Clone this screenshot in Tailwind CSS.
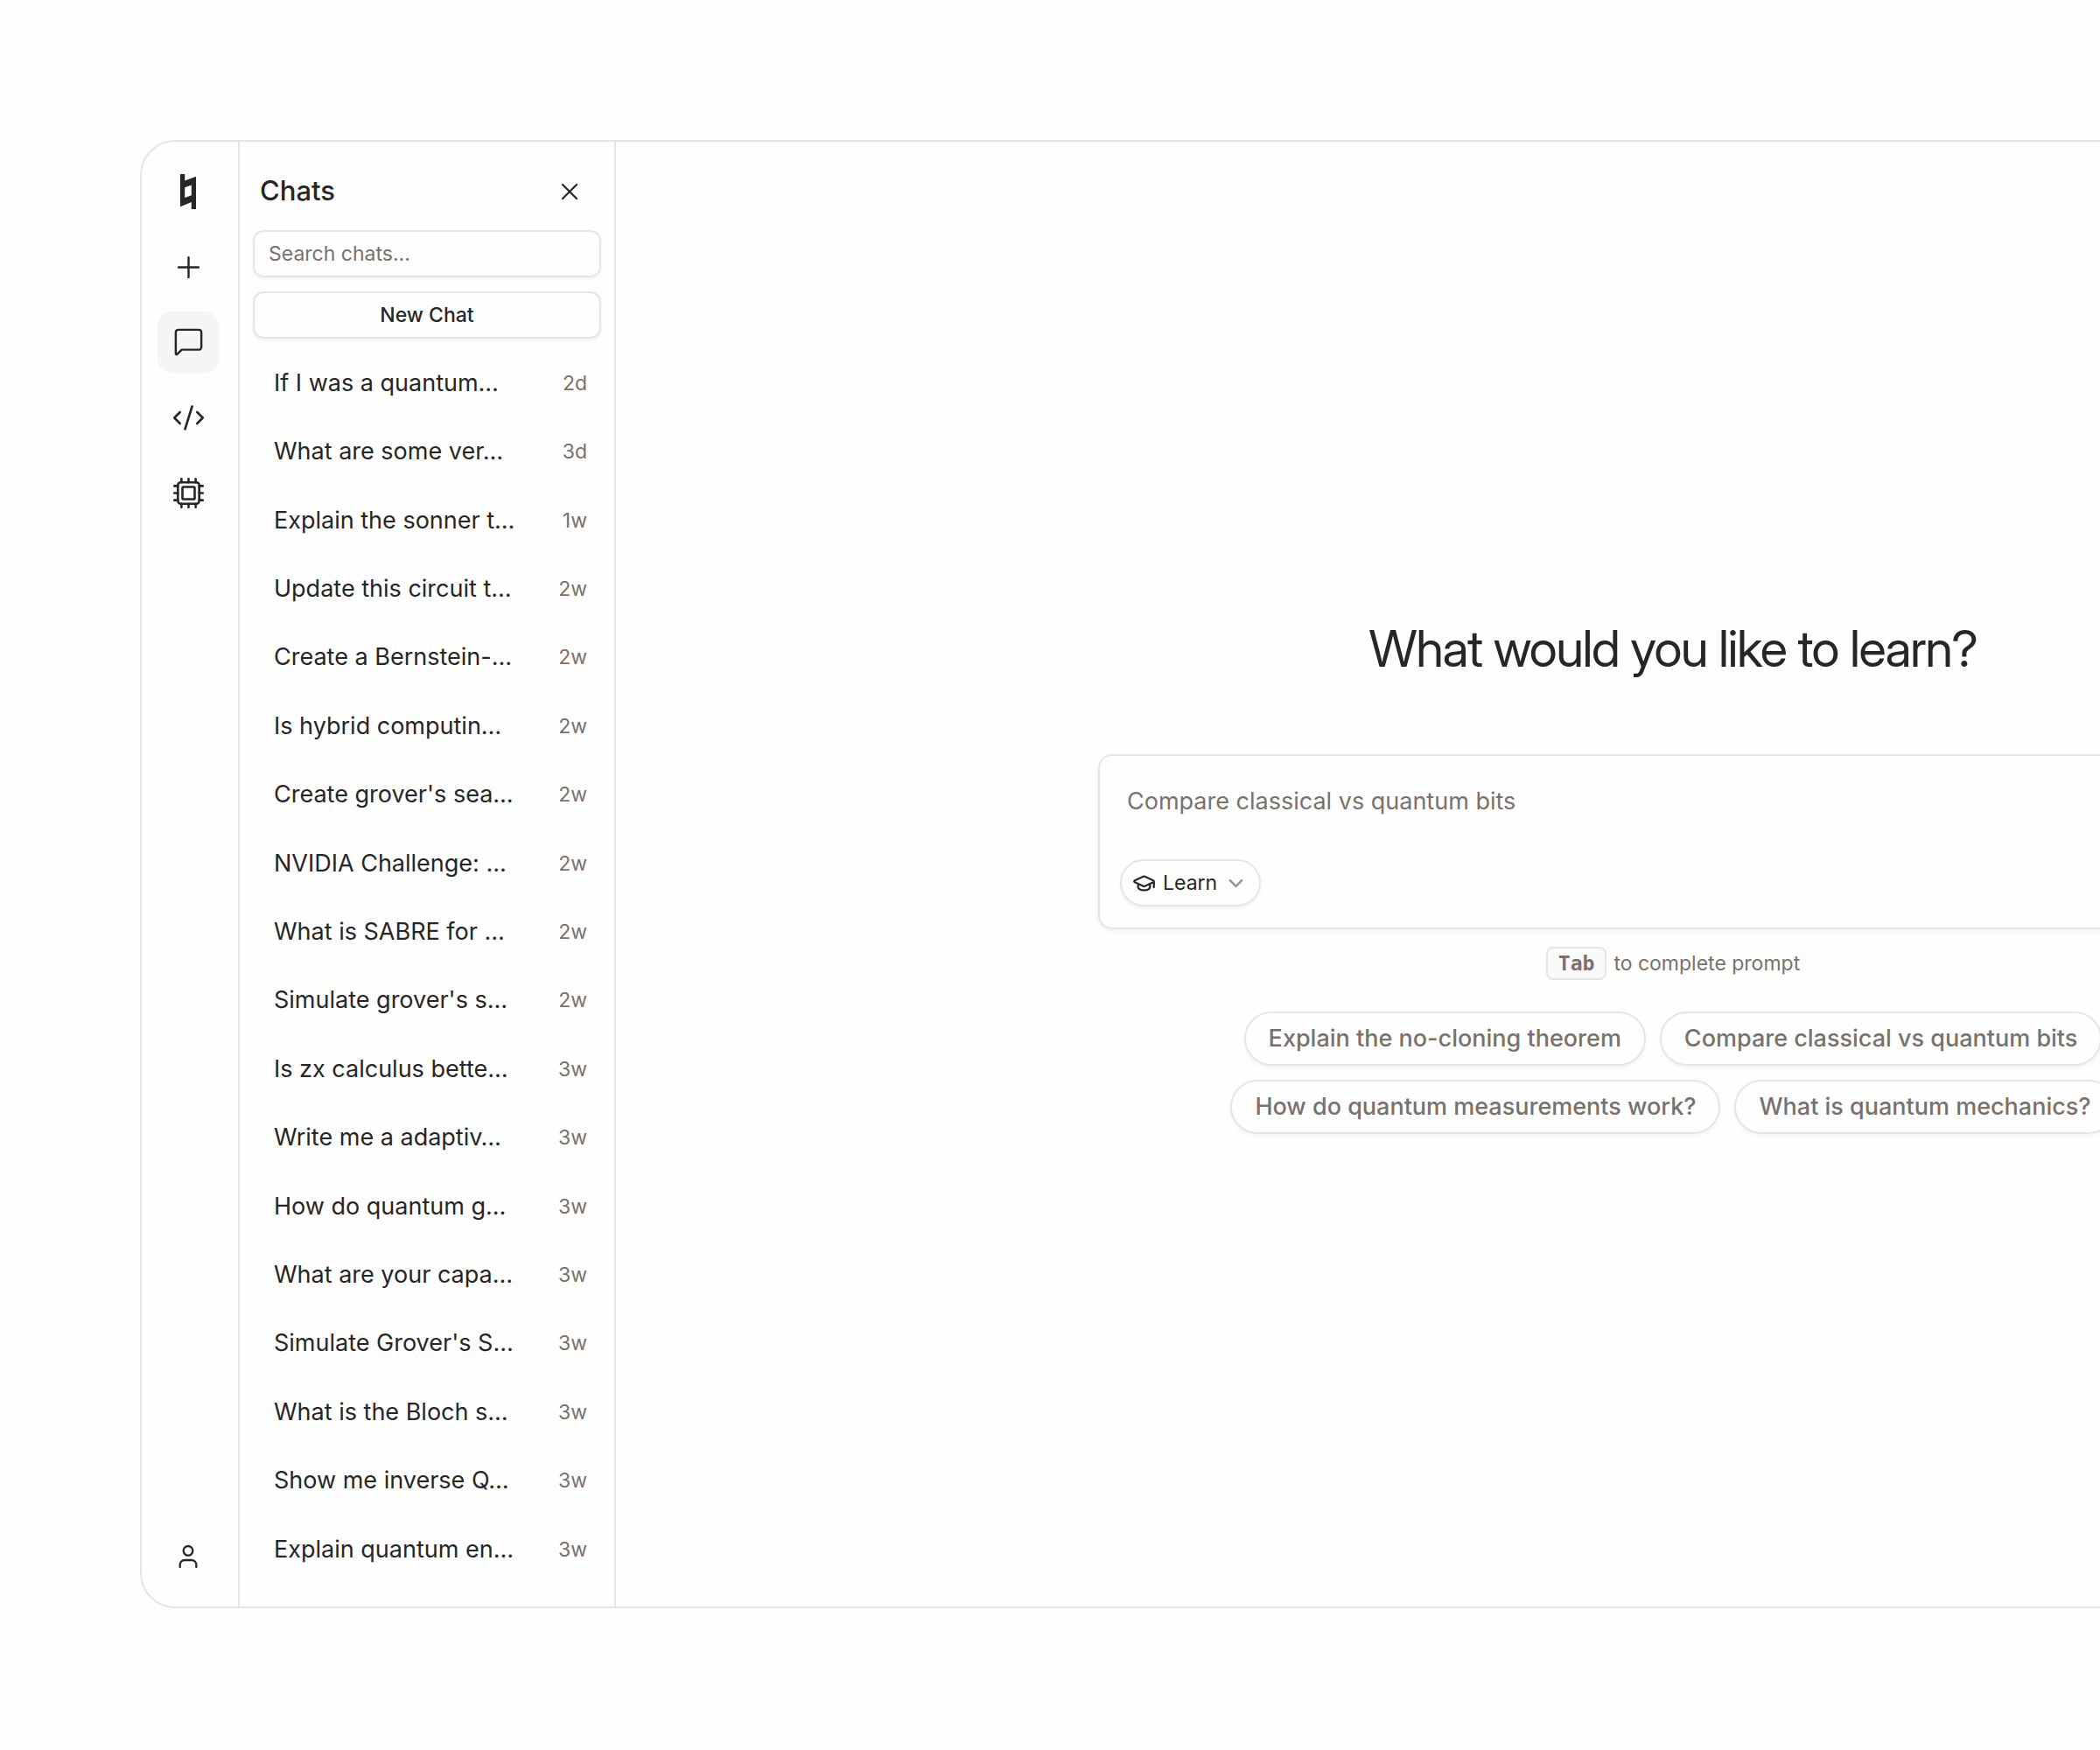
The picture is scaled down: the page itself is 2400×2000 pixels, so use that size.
<!DOCTYPE html>
<html lang="en">
<head>
    <meta charset="UTF-8">
    <meta name="viewport" content="width=device-width, initial-scale=1.0">
    <title>Chats</title>
    <script src="https://cdn.jsdelivr.net/npm/@tailwindcss/browser@4"></script>
</head>
<body class="bg-[#fefefe] text-[#262626] font-['Inter',sans-serif] overflow-x-hidden">
    <!-- App window, runs off the right edge of the page -->
    <div class="mt-40 ml-40 -mr-[722px] mb-40 flex min-h-[1678px] rounded-[40px] border-2 border-[#e5e5e5]">

        <!-- Icon rail -->
        <nav class="flex w-28 shrink-0 flex-col items-start gap-4 border-r-2 border-[#e5e5e5] py-[22px] pl-[18px]">
            <a href="#" aria-label="Home" class="flex size-[70px] items-center justify-center">
                <svg class="h-10 w-[18px]" viewBox="0 0 52 116" preserveAspectRatio="none" fill="currentColor" fill-rule="evenodd"><path d="M0 0H15V22L52 8V116H37V93L0 108ZM15 44V78L37 70V36Z"/></svg>
            </a>
            <button aria-label="New" class="flex size-[70px] items-center justify-center rounded-2xl">
                <svg class="size-[39px]" viewBox="0 0 24 24" fill="none" stroke="currentColor" stroke-width="1.5" stroke-linecap="round" stroke-linejoin="round"><path d="M5 12h14M12 5v14"/></svg>
            </button>
            <button aria-label="Chats" class="flex size-[70px] items-center justify-center rounded-2xl bg-[#f5f5f4]">
                <svg class="size-[39px]" viewBox="0 0 24 24" fill="none" stroke="currentColor" stroke-width="1.5" stroke-linecap="round" stroke-linejoin="round"><path d="M21 15.200a1.800 1.800 0 0 1-1.800 1.800H7.200l-3.200 3.200a.6.6 0 0 1-1-.4V4.800A1.800 1.800 0 0 1 4.800 3h14.400A1.800 1.800 0 0 1 21 4.800z"/></svg>
            </button>
            <button aria-label="Code" class="flex size-[70px] items-center justify-center rounded-2xl">
                <svg class="size-[39px]" viewBox="0 0 24 24" fill="none" stroke="currentColor" stroke-width="1.6" stroke-linecap="round" stroke-linejoin="round"><path d="m18 16 4-4-4-4M6 8l-4 4 4 4M14.500 4l-5 16"/></svg>
            </button>
            <button aria-label="Devices" class="flex size-[70px] items-center justify-center rounded-2xl">
                <svg class="size-[39px]" viewBox="0 0 24 24" fill="none" stroke="currentColor" stroke-width="1.6" stroke-linecap="round" stroke-linejoin="round"><rect x="4.500" y="4.500" width="15" height="15" rx="2"/><rect x="7.700" y="7.700" width="8.600" height="8.600" rx=".8"/><path d="M7 4.500V2M12 4.500V2M17 4.500V2M7 22v-2.500M12 22v-2.500M17 22v-2.500M4.500 7H2M4.500 12H2M4.500 17H2M22 7h-2.500M22 12h-2.500M22 17h-2.500"/></svg>
            </button>
            <button aria-label="Account" class="mt-auto flex size-[70px] items-center justify-center rounded-2xl">
                <svg class="size-8" viewBox="0 0 24 24" fill="none" stroke="currentColor" stroke-width="1.7" stroke-linecap="round" stroke-linejoin="round"><path d="M19 21v-2a4 4 0 0 0-4-4H9a4 4 0 0 0-4 4v2"/><circle cx="12" cy="7" r="4"/></svg>
            </button>
        </nav>

        <!-- Chat history -->
        <aside class="flex w-[430px] shrink-0 flex-col border-r-2 border-[#e5e5e5] px-[15px] pb-[26px]">
            <div class="flex h-[101px] items-center justify-between pt-3 pr-5 pl-2">
                <h2 class="text-[31px] font-medium">Chats</h2>
                <button aria-label="Close">
                    <svg class="size-8" viewBox="0 0 24 24" fill="none" stroke="currentColor" stroke-width="1.7" stroke-linecap="round" stroke-linejoin="round"><path d="M18 6 6 18M6 6l12 12"/></svg>
                </button>
            </div>
            <input type="text" aria-label="Search chats" placeholder="Search chats..." class="h-[54px] rounded-xl border-2 border-[#e5e5e5] px-4 text-[23px] shadow-[0_2px_4px_rgba(0,0,0,0.05)] placeholder:text-stone-500">
            <button class="mt-4 h-[54px] shrink-0 rounded-xl border-2 border-[#e5e5e5] text-[23px] font-medium shadow-[0_2px_4px_rgba(0,0,0,0.05)]">New Chat</button>
            <ul id="chat-list" class="mt-3 grid flex-1 auto-rows-fr"></ul>
        </aside>

        <!-- Prompt -->
        <main class="flex flex-1 flex-col items-center justify-center">
            <h1 class="mb-[82px] font-['Inter_Display','Inter',sans-serif] text-[58px] leading-[78px] tracking-tight">What would you like to learn?</h1>
            <div class="flex h-[200px] w-full max-w-[1314px] flex-col justify-between rounded-2xl border-2 border-[#e5e5e5] px-[23px] py-6 shadow-[0_2px_4px_rgba(0,0,0,0.06)]">
                <input type="text" aria-label="Prompt" placeholder="Compare classical vs quantum bits" class="mt-2 ml-2 h-10 text-[27px] placeholder:text-stone-500">
                <button class="flex h-[54px] w-[161px] items-center gap-2 rounded-full border-2 border-[#e5e5e5] px-3 text-[23px] shadow-[0_2px_4px_rgba(0,0,0,0.05)]">
                    <svg class="size-[27px] shrink-0" viewBox="0 0 24 24" fill="none" stroke="currentColor" stroke-width="2" stroke-linecap="round" stroke-linejoin="round"><path d="M21.420 10.922a1 1 0 0 0-.019-1.838L12.830 5.180a2 2 0 0 0-1.660 0L2.600 9.080a1 1 0 0 0 0 1.832l8.570 3.908a2 2 0 0 0 1.660 0zM22 10v6M6 12.500V16a6 3 0 0 0 12 0v-3.500"/></svg>
                    Learn
                    <svg class="size-[27px] shrink-0 opacity-50" viewBox="0 0 24 24" fill="none" stroke="currentColor" stroke-width="2" stroke-linecap="round" stroke-linejoin="round"><path d="m6 9 6 6 6-6"/></svg>
                </button>
            </div>
            <p class="mt-5 flex items-center gap-2 text-[23px] text-stone-500">
                <kbd class="flex h-[38px] items-center rounded-lg border-2 border-[#e5e5e5] bg-[#fafafa] px-3 font-['DejaVu_Sans_Mono',monospace] font-bold">Tab</kbd>
                to complete prompt
            </p>
            <div class="mt-9 flex max-w-[1100px] flex-wrap justify-center gap-4 text-[27px] font-medium text-stone-500">
                <button class="h-[62px] rounded-full border-2 border-[#e5e5e5] px-[26px] shadow-[0_2px_4px_rgba(0,0,0,0.05)]">Explain the no-cloning theorem</button>
                <button class="h-[62px] rounded-full border-2 border-[#e5e5e5] px-[26px] shadow-[0_2px_4px_rgba(0,0,0,0.05)]">Compare classical vs quantum bits</button>
                <button class="h-[62px] rounded-full border-2 border-[#e5e5e5] px-[26px] shadow-[0_2px_4px_rgba(0,0,0,0.05)]">How do quantum measurements work?</button>
                <button class="h-[62px] rounded-full border-2 border-[#e5e5e5] px-[26px] shadow-[0_2px_4px_rgba(0,0,0,0.05)]">What is quantum mechanics?</button>
            </div>
        </main>
    </div>

    <script>
        const chats = [
            ['If I was a quantum…', '2d'],
            ['What are some ver…', '3d'],
            ['Explain the sonner t…', '1w'],
            ['Update this circuit t…', '2w'],
            ['Create a Bernstein-…', '2w'],
            ['Is hybrid computin…', '2w'],
            ["Create grover's sea…", '2w'],
            ['NVIDIA Challenge: …', '2w'],
            ['What is SABRE for …', '2w'],
            ["Simulate grover's s…", '2w'],
            ['Is zx calculus bette…', '3w'],
            ['Write me a adaptiv…', '3w'],
            ['How do quantum g…', '3w'],
            ['What are your capa…', '3w'],
            ["Simulate Grover's S…", '3w'],
            ['What is the Bloch s…', '3w'],
            ['Show me inverse Q…', '3w'],
            ['Explain quantum en…', '3w'],
        ];

        document.getElementById('chat-list').innerHTML = chats.map(([title, age]) => `
            <li class="flex">
                <a href="#" class="flex flex-1 items-center justify-between pr-4 pl-6">
                    <span class="text-[27px] whitespace-nowrap">${title}</span>
                    <span class="text-[23px] text-stone-500">${age}</span>
                </a>
            </li>`).join('');
    </script>
</body>
</html>
